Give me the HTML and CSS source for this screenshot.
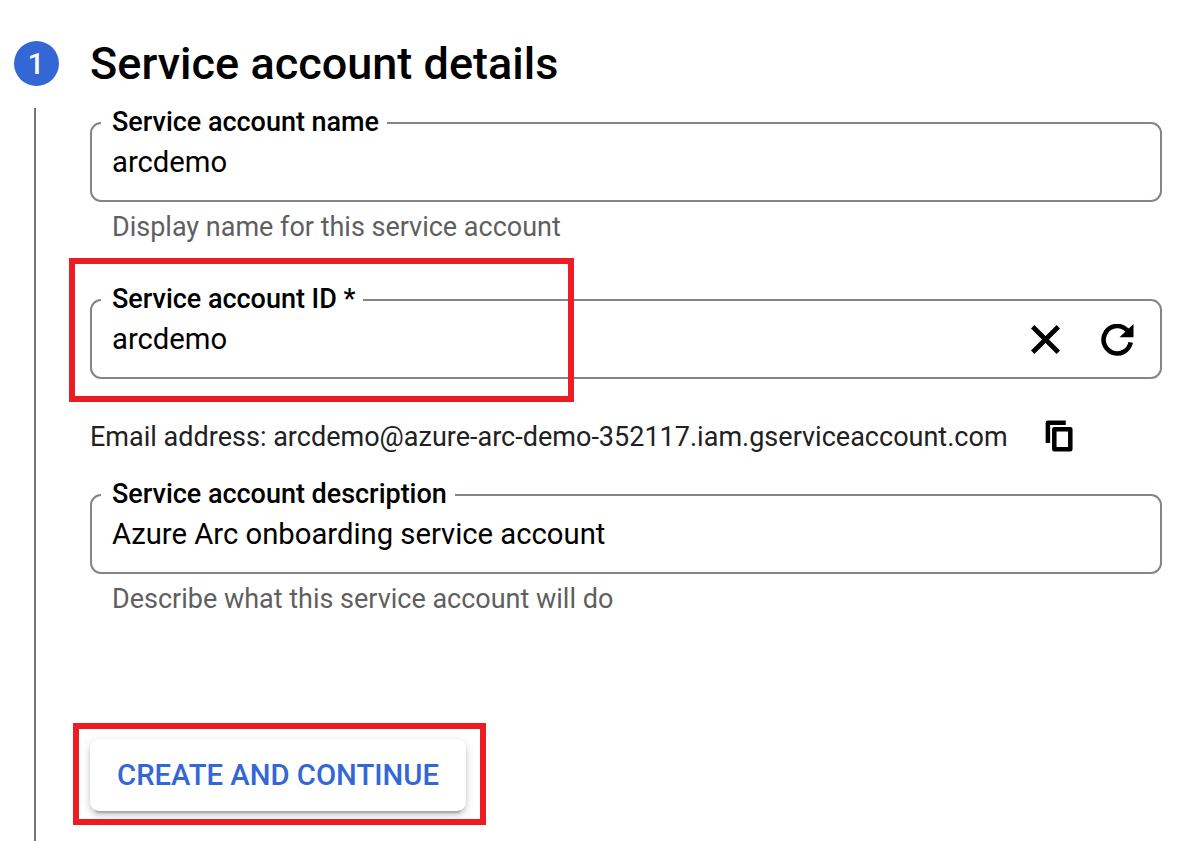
FILE: index.html
```html
<!DOCTYPE html>
<html lang="en">
<head>
<meta charset="utf-8">
<title>Service account details</title>
<link rel="stylesheet" href="styles.css">
</head>
<body>
<main class="step">
  <div class="rail">
    <span class="badge">1</span>
    <span class="line"></span>
  </div>
  <section class="content">
    <h1 class="title">Service account details</h1>
    <fieldset class="field">
      <legend class="label">Service account name</legend>
      <span class="value">arcdemo</span>
    </fieldset>
    <p class="hint">Display name for this service account</p>
    <fieldset class="field">
      <legend class="label">Service account ID *</legend>
      <span class="value">arcdemo</span>
      <span class="actions">
        <svg class="icon-close" viewBox="0 0 30 30"><path d="M2.700 1.700L28.300 27.300M28.300 1.700L2.700 27.300" fill="none" stroke="#000" stroke-width="4.800"/></svg>
        <svg class="icon-refresh" viewBox="4 4 16 16"><path d="M18.600 13.200A6.850 6.850 0 1 1 16.900 7.200" fill="none" stroke="#000" stroke-width="2.300"/><path d="M20 4v6.600h-7z"/></svg>
      </span>
    </fieldset>
    <div class="email">
      <span>Email address: arcdemo@azure-arc-demo-352117.iam.gserviceaccount.com</span>
      <svg class="icon-copy" viewBox="0 0 28 32"><path d="M2.900 23V2.700H20.800" fill="none" stroke="#000" stroke-width="4.500" stroke-linejoin="round"/><rect x="9.300" y="9.300" width="16" height="20" fill="none" stroke="#000" stroke-width="4.500" stroke-linejoin="round"/></svg>
    </div>
    <fieldset class="field">
      <legend class="label">Service account description</legend>
      <span class="value">Azure Arc onboarding service account</span>
    </fieldset>
    <p class="hint">Describe what this service account will do</p>
    <button class="create">CREATE AND CONTINUE</button>
  </section>
</main>
<div class="mark mark-id"></div>
<div class="mark mark-create"></div>
</body>
</html>
```
FILE: styles.css
```css
* { box-sizing: border-box; }
body {
  margin: 0;
  height: 841px;
  overflow: hidden;
  position: relative;
  background: #fff;
  color: #000;
  font-family: Roboto, "Liberation Sans", sans-serif;
}
.step { display: flex; height: 841px; padding-top: 41px; }
.rail { width: 90px; padding-left: 14px; display: flex; flex-direction: column; }
.badge {
  width: 45px;
  height: 45px;
  border-radius: 50%;
  background: #3367d6;
  color: #fff;
  font-size: 29px;
  font-weight: 500;
  line-height: 46px;
  text-align: center;
  padding-right: 1px;
}
.line { flex: 1; width: 2px; margin: 22px 0 0 20px; background: #757575; }
.content { width: 1072px; display: flex; flex-direction: column; }
.title { margin: 0; height: 66px; font-size: 45px; font-weight: 500; line-height: 46px; letter-spacing: .02px; white-space: nowrap; }
.field {
  position: relative;
  min-width: 0;
  height: 95px;
  margin: 0;
  padding: 0 25px 0 20px;
  border: 2px solid #80868b;
  border-radius: 11px;
}
.label {
  height: 32px;
  margin-left: -11px;
  padding: 0 8px 0 11px;
  font-size: 27px;
  font-weight: 500;
  line-height: 30px;
  letter-spacing: -.025px;
}
.value { display: block; font-size: 29.25px; line-height: 46px; letter-spacing: -.01px; }
.hint { margin: 0; height: 82px; padding-left: 22px; color: #5f5f5f; font-size: 27px; line-height: 50px; letter-spacing: -.01px; }
.actions { position: absolute; right: 26px; top: 8px; display: flex; align-items: center; gap: 41px; }
.icon-close { width: 30px; height: 30px; }
.icon-refresh { width: 33px; height: 32px; }
.email {
  height: 100px;
  padding: 36px 0 20px;
  display: flex;
  align-items: center;
  gap: 37px;
  color: #212121;
  font-size: 27px;
  line-height: 44px;
  letter-spacing: .01px;
  white-space: nowrap;
}
.icon-copy { width: 28px; height: 32px; margin-bottom: 2px; }
.create {
  width: 376px;
  height: 72px;
  margin-top: 83px;
  padding: 0;
  border: 0;
  border-radius: 9px;
  background: #fff;
  color: #3367d6;
  font: 500 29.25px/72px Roboto, "Liberation Sans", sans-serif;
  box-shadow: 0 7px 2px -5px rgba(0,0,0,.2), 0 4px 5px rgba(0,0,0,.14), 0 2px 11px rgba(0,0,0,.12);
}
.mark { position: absolute; border: 6px solid #ed1c24; }
.mark-id { left: 69px; top: 258px; width: 505px; height: 144px; }
.mark-create { left: 73px; top: 723px; width: 413px; height: 102px; }
```
